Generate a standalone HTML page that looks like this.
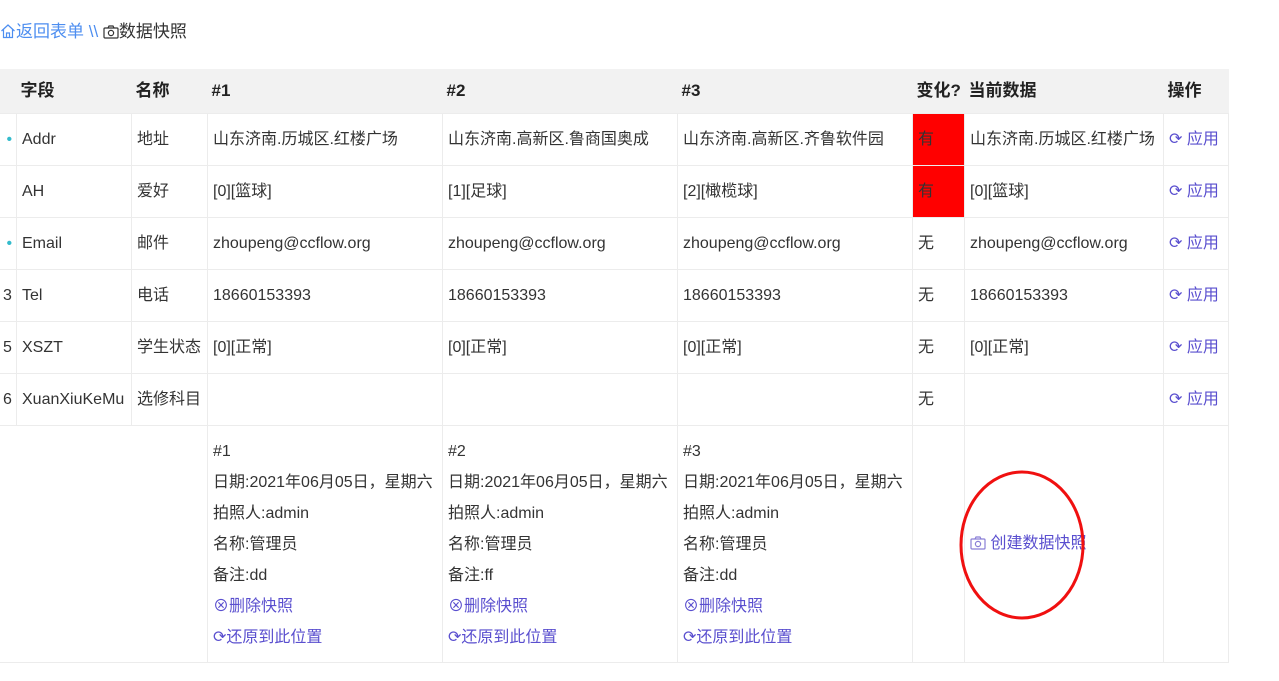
<!DOCTYPE html>
<html><head><meta charset="utf-8"><style>
body{margin:0;background:#fff;font-family:"Liberation Sans","Noto Sans CJK SC",sans-serif;color:#333;font-size:16px;position:relative;width:1279px;height:681px;overflow:hidden}
.bc{position:absolute;left:0;top:21px;font-size:17px;line-height:22px;white-space:nowrap}
.bc a{color:#4d8ef0;text-decoration:none}
table{position:absolute;left:-20px;top:69px;border-collapse:collapse;table-layout:fixed;width:1248px}
td,th{padding:0 0 0 5px;text-align:left;white-space:nowrap;overflow:hidden;vertical-align:middle;line-height:20px}
td>*,th>*{line-height:20px}
th{background:#f2f2f2;height:44px;font-size:17px;font-weight:bold;color:#222;padding-left:4px}
td{height:51px;border:1px solid #ececec;color:#333}
tr.ft td{height:226px;vertical-align:top;padding-top:10px}
.l{color:#5a4fcf}
.red{background:#f00}
.ft div{line-height:31px;height:31px}
.ico{display:inline-block;vertical-align:-2px}
</style></head><body>
<div class="bc"><a>
<svg class="ico" width="16" height="16" viewBox="0 0 16 16"><path d="M1.5 8 L8 2 L14.5 8 M3.5 6.5 V14.5 H12.5 V6.5 M6.5 14.5 V10 H9.5 V14.5" fill="none" stroke="#4d8ef0" stroke-width="1.2"/></svg>返回表单</a> <span style="color:#4d8ef0">\\</span> <svg class="ico" width="16" height="14" viewBox="0 0 16 14"><rect x="1" y="3" width="14" height="10" rx="1" fill="none" stroke="#333" stroke-width="1.2"/><circle cx="8" cy="8" r="2.6" fill="none" stroke="#333" stroke-width="1.2"/><path d="M5 3 L6 1 H10 L11 3" fill="none" stroke="#333" stroke-width="1.2"/></svg>数据快照</div>
<table>
<colgroup><col style="width:36px"><col style="width:115px"><col style="width:76px"><col style="width:235px"><col style="width:235px"><col style="width:235px"><col style="width:52px"><col style="width:199px"><col style="width:65px"></colgroup>
<tr><th></th><th>字段</th><th>名称</th><th>#1</th><th>#2</th><th>#3</th><th>变化?</th><th>当前数据</th><th>操作</th></tr>
<tr><td style="color:#3bc">　&nbsp;•</td><td>Addr</td><td>地址</td><td>山东济南.历城区.红楼广场</td><td>山东济南.高新区.鲁商国奥成</td><td>山东济南.高新区.齐鲁软件园</td><td class="red">有</td><td>山东济南.历城区.红楼广场</td><td class="l">⟳ 应用</td></tr>
<tr><td></td><td>AH</td><td>爱好</td><td>[0][篮球]</td><td>[1][足球]</td><td>[2][橄榄球]</td><td class="red">有</td><td>[0][篮球]</td><td class="l">⟳ 应用</td></tr>
<tr><td style="color:#3bc">　&nbsp;•</td><td>Email</td><td>邮件</td><td>zhoupeng@ccflow.org</td><td>zhoupeng@ccflow.org</td><td>zhoupeng@ccflow.org</td><td>无</td><td>zhoupeng@ccflow.org</td><td class="l">⟳ 应用</td></tr>
<tr><td style="padding-left:22px">3</td><td>Tel</td><td>电话</td><td>18660153393</td><td>18660153393</td><td>18660153393</td><td>无</td><td>18660153393</td><td class="l">⟳ 应用</td></tr>
<tr><td style="padding-left:22px">5</td><td>XSZT</td><td>学生状态</td><td>[0][正常]</td><td>[0][正常]</td><td>[0][正常]</td><td>无</td><td>[0][正常]</td><td class="l">⟳ 应用</td></tr>
<tr><td style="padding-left:22px">6</td><td>XuanXiuKeMu</td><td>选修科目</td><td></td><td></td><td></td><td>无</td><td></td><td class="l">⟳ 应用</td></tr>
<tr class="ft"><td style="border-right:0;border-left:0"></td><td style="border-right:0;border-left:0"></td><td style="border-left:0"></td>
<td><div>#1</div><div>日期:2021年06月05日，星期六</div><div>拍照人:admin</div><div>名称:管理员</div><div>备注:dd</div><div class="l">⊗删除快照</div><div class="l">⟳还原到此位置</div></td>
<td><div>#2</div><div>日期:2021年06月05日，星期六</div><div>拍照人:admin</div><div>名称:管理员</div><div>备注:ff</div><div class="l">⊗删除快照</div><div class="l">⟳还原到此位置</div></td>
<td><div>#3</div><div>日期:2021年06月05日，星期六</div><div>拍照人:admin</div><div>名称:管理员</div><div>备注:dd</div><div class="l">⊗删除快照</div><div class="l">⟳还原到此位置</div></td>
<td></td><td style="vertical-align:middle;padding-top:0" class="l"><svg class="ico" width="16" height="14" viewBox="0 0 16 14"><rect x="1" y="3" width="14" height="10" rx="1" fill="none" stroke="#8a7fd6" stroke-width="1.2"/><circle cx="8" cy="8" r="2.6" fill="none" stroke="#8a7fd6" stroke-width="1.2"/><path d="M5 3 L6 1 H10 L11 3" fill="none" stroke="#8a7fd6" stroke-width="1.2"/></svg> 创建数据快照</td><td></td></tr>
</table>
<svg style="position:absolute;left:0;top:0" width="1279" height="681"><ellipse cx="1022" cy="545" rx="61" ry="73" fill="none" stroke="#f01010" stroke-width="3"/></svg>
</body></html>
